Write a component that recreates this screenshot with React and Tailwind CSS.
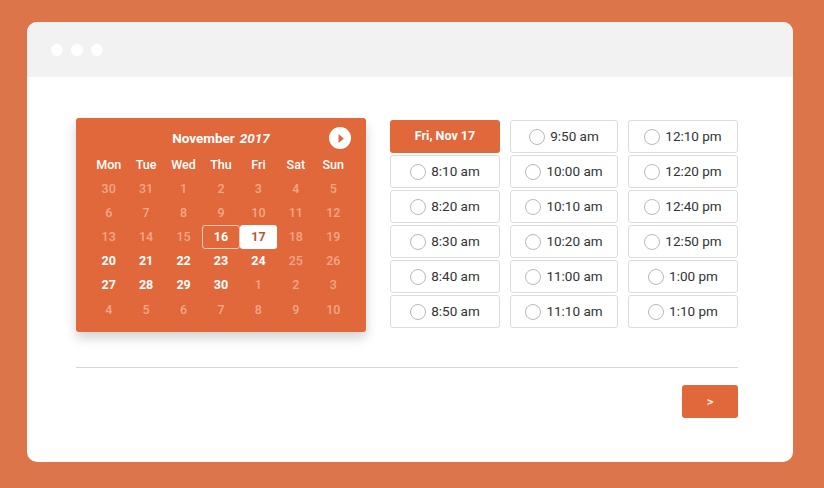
import React, { useState } from 'react';

const weekDays = ['Mon', 'Tue', 'Wed', 'Thu', 'Fri', 'Sat', 'Sun'];

// each day: [label, kind] kind: f = faded, b = bold, o = outlined, s = selected
const weeks = [
  [['30', 'f'], ['31', 'f'], ['1', 'f'], ['2', 'f'], ['3', 'f'], ['4', 'f'], ['5', 'f']],
  [['6', 'f'], ['7', 'f'], ['8', 'f'], ['9', 'f'], ['10', 'f'], ['11', 'f'], ['12', 'f']],
  [['13', 'f'], ['14', 'f'], ['15', 'f'], ['16', 'o'], ['17', 's'], ['18', 'f'], ['19', 'f']],
  [['20', 'b'], ['21', 'b'], ['22', 'b'], ['23', 'b'], ['24', 'b'], ['25', 'f'], ['26', 'f']],
  [['27', 'b'], ['28', 'b'], ['29', 'b'], ['30', 'b'], ['1', 'f'], ['2', 'f'], ['3', 'f']],
  [['4', 'f'], ['5', 'f'], ['6', 'f'], ['7', 'f'], ['8', 'f'], ['9', 'f'], ['10', 'f']],
];

const slots = [
  [null, '9:50 am', '12:10 pm'],
  ['8:10 am', '10:00 am', '12:20 pm'],
  ['8:20 am', '10:10 am', '12:40 pm'],
  ['8:30 am', '10:20 am', '12:50 pm'],
  ['8:40 am', '11:00 am', '1:00 pm'],
  ['8:50 am', '11:10 am', '1:10 pm'],
];

const dayClass = {
  f: 'text-[#f1a788] font-medium',
  b: 'text-white font-bold',
  o: 'text-white font-bold border border-[#f6c9b5] rounded-[3px]',
  s: 'text-[#c0532a] font-bold bg-white rounded-[3px]',
};

function Calendar() {
  return (
    <div className="w-[290px] h-[214px] bg-[#e0683b] rounded-[3px] shadow-[0_6px_12px_rgba(0,0,0,0.18)] px-[14px] pt-[9px] pb-[10px] flex flex-col">
      {/* 月タイトル */}
      <div className="relative h-[22px] flex items-center justify-center text-white text-[13.5px] font-bold">
        <span>November</span>
        <span className="italic ml-[5px]">2017</span>
        <button className="absolute right-[1px] top-0 w-[22px] h-[22px] rounded-full bg-white flex items-center justify-center">
          <svg width="11" height="11" viewBox="0 0 10 10">
            <path d="M3.2 1 L8 5 L3.2 9 Z" fill="#e0683b" />
          </svg>
        </button>
      </div>
      <div className="grid grid-cols-7 mt-[4px] h-[24px] items-center text-white text-[12.5px] font-medium">
        {weekDays.map((d) => (
          <div key={d} className="text-center">{d}</div>
        ))}
      </div>
      <div className="flex flex-col">
        {weeks.map((w, i) => (
          <div key={i} className="grid grid-cols-7 h-[24.2px]">
            {w.map(([label, kind], j) => (
              <div key={j} className={`flex items-center justify-center text-[12.5px] ${dayClass[kind]}`}>
                {label}
              </div>
            ))}
          </div>
        ))}
      </div>
    </div>
  );
}

function Slot({ label }) {
  return (
    <div className="h-[33px] border border-[#dcdcdc] rounded-[3px] bg-white flex items-center justify-center gap-[5px] text-[13.5px] text-[#333]">
      <span className="w-[16px] h-[16px] rounded-full border border-[#b9b9b9]" />
      <span>{label}</span>
    </div>
  );
}

export default function App() {
  const [selected] = useState('Fri, Nov 17');

  return (
    <div className="w-[824px] h-[488px] bg-[#dc7549] pt-[22px] pl-[27px] overflow-hidden" style={{ fontFamily: 'Roboto, "Liberation Sans", sans-serif' }}>
      <div className="w-[766px] h-[440px] bg-white rounded-[10px] overflow-hidden flex flex-col">
        {/* ウィンドウのヘッダー */}
        <div className="h-[55px] bg-[#f2f2f2] flex items-center pl-[24px] gap-[8px]">
          <span className="w-[12px] h-[12px] rounded-full bg-white" />
          <span className="w-[12px] h-[12px] rounded-full bg-white" />
          <span className="w-[12px] h-[12px] rounded-full bg-white" />
        </div>

        <div className="pl-[49px] pt-[41px] w-[711px]">
          <div className="flex items-start gap-[24px]">
            <Calendar />
            <div className="mt-[2px] grid grid-cols-[110px_108px_110px] content-start gap-x-[10px] gap-y-[2px]">
              {slots.map((row, i) =>
                row.map((label, j) =>
                  label === null ? (
                    <div key={`${i}-${j}`} className="h-[33px] rounded-[3px] bg-[#e0683b] flex items-center justify-center text-white text-[12.5px] font-bold">
                      {selected}
                    </div>
                  ) : (
                    <Slot key={`${i}-${j}`} label={label} />
                  )
                )
              )}
            </div>
          </div>

          <div className="mt-[35px] h-px bg-[#d6d6d6] w-[662px]" />

          <div className="w-[662px] flex justify-end mt-[17px]">
            <button className="w-[56px] h-[33px] bg-[#e0683b] rounded-[3px] text-[#fbe3d8] text-[13px] font-bold">
              &gt;
            </button>
          </div>
        </div>
      </div>
    </div>
  );
}
